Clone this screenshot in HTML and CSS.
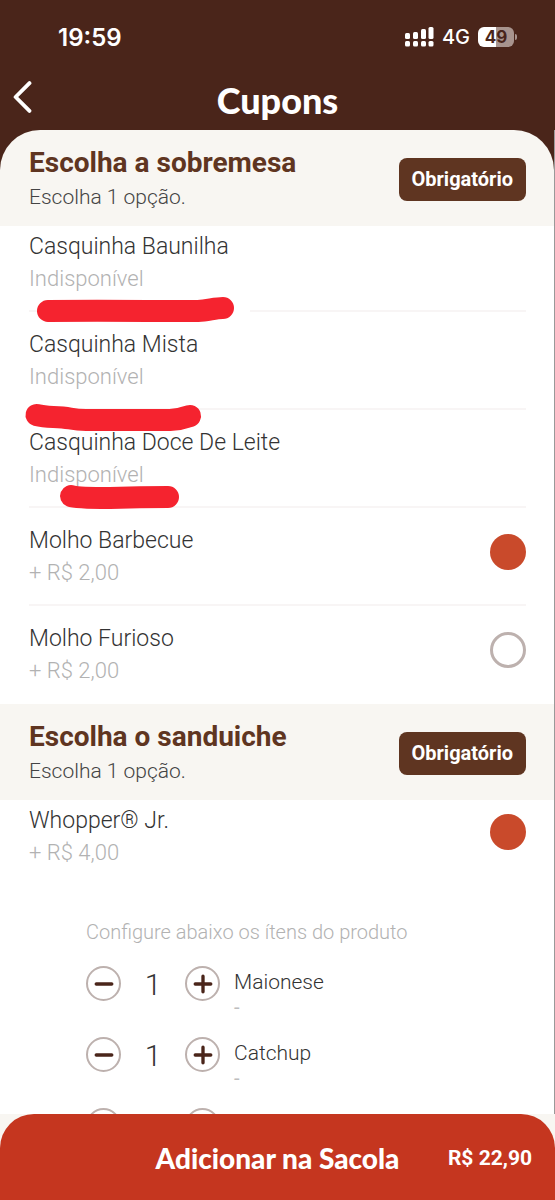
FILE: index.html
```
<!DOCTYPE html>
<html lang="pt-BR">
<head>
<meta charset="utf-8">
<meta name="viewport" content="width=device-width, initial-scale=1">
<title>Cupons</title>
<link rel="stylesheet" href="styles.css">
</head>
<body>
<div class="app">
  <header class="top">
    <div class="status">
      <time class="clock">19:59</time>
      <div class="indicators">
        <svg class="signal" viewBox="0 0 29 20" aria-hidden="true">
          <g fill="#fff">
            <rect x="0" y="6" width="5" height="6" rx="1.5"/><rect x="8" y="5" width="5" height="7" rx="1.5"/><rect x="16" y="2" width="5" height="10" rx="1.5"/><rect x="23.500" y="0" width="5" height="12" rx="1.500"/>
            <rect x="0" y="14" width="5" height="5.500" rx="1.500"/><rect x="8" y="14" width="5" height="5.500" rx="1.500"/><rect x="16" y="14" width="5" height="5.500" rx="1.500"/><rect x="23.500" y="14" width="5" height="5.500" rx="1.500"/>
          </g>
        </svg>
        <span class="network">4G</span>
        <span class="battery"><span class="charge">49</span></span>
      </div>
    </div>
    <div class="bar">
      <button class="back" type="button" aria-label="Voltar">
        <svg viewBox="0 0 18 30" aria-hidden="true"><path d="M16 2 3 15 16 28" fill="none" stroke="#fff" stroke-width="3.600" stroke-linecap="round" stroke-linejoin="round"/></svg>
      </button>
      <h1 class="title">Cupons</h1>
    </div>
  </header>

  <main class="content">
    <section>
      <div class="section-head first">
        <div>
          <h2 class="section-title">Escolha a sobremesa</h2>
          <p class="hint">Escolha 1 opção.</p>
        </div>
        <span class="badge">Obrigatório</span>
      </div>
      <div class="options">
        <div class="option"><div><p class="name">Casquinha Baunilha</p><p class="note">Indisponível</p></div></div>
        <div class="option"><div><p class="name">Casquinha Mista</p><p class="note">Indisponível</p></div></div>
        <div class="option"><div><p class="name">Casquinha Doce De Leite</p><p class="note">Indisponível</p></div></div>
        <div class="option">
          <label for="barbecue"><span class="name">Molho Barbecue</span><span class="note">+ R$ 2,00</span></label>
          <input class="radio" id="barbecue" type="radio" name="sobremesa" checked>
        </div>
        <div class="option">
          <label for="furioso"><span class="name">Molho Furioso</span><span class="note">+ R$ 2,00</span></label>
          <input class="radio" id="furioso" type="radio" name="sobremesa">
        </div>
        <svg class="marks" viewBox="0 0 300 300" aria-hidden="true">
          <g fill="none" stroke-linecap="round" stroke-linejoin="round">
            <path d="M47 85H241" stroke="#fff" stroke-width="18"/>
            <g stroke="#f5232f" stroke-width="22">
              <path d="M48 85C90 84.500 150 85 198 85C208 84.500 215 82 223 82"/>
              <path d="M36.500 189C48 192 56 190 70 192.500Q78 194 86 194H170Q180 193.500 190 190"/>
              <path d="M71 270Q76 272 110 272Q140 271 168 271"/>
            </g>
          </g>
        </svg>
      </div>
    </section>

    <section>
      <div class="section-head">
        <div>
          <h2 class="section-title">Escolha o sanduiche</h2>
          <p class="hint">Escolha 1 opção.</p>
        </div>
        <span class="badge">Obrigatório</span>
      </div>
      <div class="options">
        <div class="option">
          <label for="whopper"><span class="name">Whopper® Jr.</span><span class="note">+ R$ 4,00</span></label>
          <input class="radio" id="whopper" type="radio" name="sanduiche" checked>
        </div>
      </div>
      <div class="extras">
        <p class="extras-title">Configure abaixo os ítens do produto</p>
        <div class="extra">
          <button class="round" type="button" aria-label="Menos maionese"><svg viewBox="0 0 18 18"><path d="M2 9H16"/></svg></button>
          <output class="count">1</output>
          <button class="round" type="button" aria-label="Mais maionese"><svg viewBox="0 0 18 18"><path d="M2 9H16M9 2V16"/></svg></button>
          <div class="extra-text"><p class="extra-name">Maionese</p><p class="extra-price">-</p></div>
        </div>
        <div class="extra">
          <button class="round" type="button" aria-label="Menos catchup"><svg viewBox="0 0 18 18"><path d="M2 9H16"/></svg></button>
          <output class="count">1</output>
          <button class="round" type="button" aria-label="Mais catchup"><svg viewBox="0 0 18 18"><path d="M2 9H16M9 2V16"/></svg></button>
          <div class="extra-text"><p class="extra-name">Catchup</p><p class="extra-price">-</p></div>
        </div>
        <div class="extra">
          <button class="round" type="button" aria-label="Menos"><svg viewBox="0 0 18 18"><path d="M2 9H16"/></svg></button>
          <span class="count"></span>
          <button class="round" type="button" aria-label="Mais"><svg viewBox="0 0 18 18"><path d="M2 9H16M9 2V16"/></svg></button>
        </div>
      </div>
    </section>
  </main>

  <footer class="footer">
    <button class="add" type="button">
      <span class="add-label">Adicionar na Sacola</span>
      <span class="add-price">R$ 22,90</span>
    </button>
  </footer>
</div>
</body>
</html>
```
FILE: styles.css
```
* { box-sizing: border-box; }
body, h1, h2, p { margin: 0; }
body { font-family: Roboto, "Liberation Sans", sans-serif; color: #444; background: #fff; }
button { font: inherit; color: inherit; border: 0; padding: 0; background: none; cursor: pointer; }

.app { display: flex; flex-direction: column; height: 100vh; }

.top { background: #4a251a; color: #fff; padding-top: 20px; }
.status { display: flex; justify-content: space-between; align-items: center; height: 34px; padding: 0 41px 0 58px; font-family: Inter, sans-serif; }
.clock { font-size: 24px; font-weight: 600; }
.indicators { display: flex; align-items: center; gap: 8px; }
.signal { width: 29px; height: 20px; }
.network { font-size: 20px; font-weight: 500; }
.battery { position: relative; width: 36px; height: 20px; border-radius: 6px; background: linear-gradient(90deg, #fff 50%, #a8948e 50%); }
.battery::after { content: ""; position: absolute; right: -3px; top: 7px; width: 2px; height: 6px; border-radius: 0 2px 2px 0; background: #a8948e; }
.charge { display: block; text-align: center; font-size: 17px; line-height: 20px; font-weight: 700; color: #4a251a; }
.bar { display: grid; grid-template-columns: 48px 1fr 48px; align-items: center; height: 76px; padding-top: 16px; }
.back { display: flex; align-items: center; align-self: start; height: 54px; padding-left: 12px; }
.back svg { width: 20px; height: 32px; }
.title { text-align: center; font-family: Lato, sans-serif; font-size: 36px; line-height: 44px; font-weight: 900; }

.content { flex: 1; min-height: 0; overflow-y: auto; scrollbar-width: none; border-right: 1px solid #999; background: linear-gradient(#4a251a 60px, #fff 60px); }
.section-head { display: flex; justify-content: space-between; align-items: center; padding: 14px 28px 12px 29px; background: #f8f6f2; }
.first { border-radius: 40px 40px 0 0; }
.section-title { font-size: 28px; line-height: 37px; font-weight: 700; color: #5f3521; }
.hint { font-size: 21px; line-height: 33px; font-weight: 300; }
.badge { padding: 10px 13px; border-radius: 8px; background: #5f3521; color: #fff; font-size: 20px; line-height: 23px; font-weight: 700; }

.options { position: relative; background: #fff; }
.option { display: flex; justify-content: space-between; align-items: flex-start; margin: 0 28px 0 29px; padding: 17px 0 15px; border-bottom: 2px solid #f8f5f5; }
.option:first-child { padding-top: 5px; }
.option:last-of-type { border-color: transparent; }
.option label { flex: 1; cursor: pointer; }
.name, .note { display: block; line-height: 32px; font-weight: 300; }
.name { font-size: 23px; color: #333; }
.note { font-size: 22px; color: #b2b2b2; }
.radio { appearance: none; width: 36px; height: 36px; margin: 9px 0 0; border: 3px solid #bdb1ae; border-radius: 50%; }
.radio:checked { border: 0; background: #c94a2b; }
.marks { position: absolute; left: 0; top: 0; width: 300px; height: 300px; pointer-events: none; }

.extras { padding: 30px 28px 0 86px; background: #fff; }
.extras-title { font-size: 20px; line-height: 32px; font-weight: 300; color: #b2b2b2; }
.extra { display: flex; align-items: center; height: 71px; }
.round { display: flex; align-items: center; justify-content: center; width: 35px; height: 35px; border: 2px solid #bdb1ae; border-radius: 50%; }
.round svg { width: 20px; height: 20px; fill: none; stroke: #4a251a; stroke-width: 3; stroke-linecap: round; }
.count { width: 64px; padding-top: 2px; text-align: center; font-size: 30px; line-height: 36px; font-weight: 300; color: #333; }
.extra-text { margin-left: 14px; padding-top: 18px; }
.extra-name { font-size: 21px; line-height: 28px; font-weight: 300; color: #333; }
.extra-price { font-size: 20px; line-height: 22px; color: #bdbdbd; }

.footer { background: #f8f6f2; }
.add { display: grid; grid-template-columns: 1fr auto 1fr; align-items: center; width: 100%; height: 86px; padding: 2px 23px 0; border-radius: 34px 34px 0 0; background: #c5361f; color: #fff; }
.add-label { grid-column: 2; font-family: Lato, sans-serif; font-size: 28px; font-weight: 900; }
.add-price { text-align: right; font-size: 21px; font-weight: 700; }
```
